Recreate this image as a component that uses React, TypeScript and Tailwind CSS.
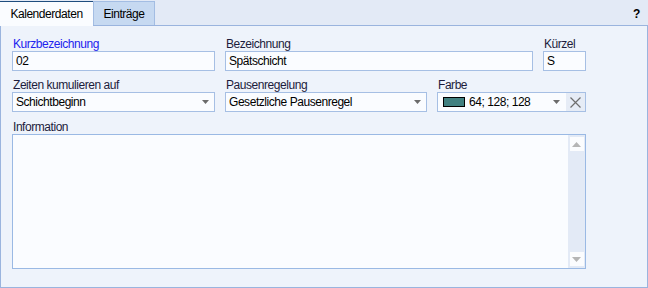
import React from "react";

const Arrow = () => (
  <svg width="7" height="4" viewBox="0 0 7 4" className="shrink-0">
    <path d="M0 0H7L3.5 4Z" fill="#6b6b6b" />
  </svg>
);

function Label({ children, blue }: { children: React.ReactNode; blue?: boolean }) {
  return (
    <div className={`h-[14px] leading-[14px] pl-[1px] ${blue ? "text-[#2222ee]" : "text-[#1c1c3c]"}`}>{children}</div>
  );
}

function Input({ value, w }: { value: string; w: string }) {
  return (
    <div className={`${w} h-[20px] border border-[#a6bfe4] bg-[#fafcff] flex items-center px-[3px] text-black`}>{value}</div>
  );
}

function Select({ value, w }: { value: string; w: string }) {
  return (
    <div className={`${w} h-[20px] border border-[#a6bfe4] bg-[#fafcff] flex items-center pl-[3px] pr-[5px] text-black`}>
      <span className="flex-1">{value}</span>
      <Arrow />
    </div>
  );
}

export default function App() {
  return (
    <div
      className="w-[648px] h-[288px] bg-[#e3eaf6] flex flex-col text-[12px] tracking-[-0.45px] overflow-hidden"
      style={{ fontFamily: '"Segoe UI", "Liberation Sans", Arial, sans-serif' }}
    >
      <div className="h-[25px] flex items-end relative">
        <div className="w-[93px] h-[25px] bg-[#fafcff] border-t border-t-[#1f4d7e] flex items-center justify-center text-black -mb-[1px] z-10 relative">
          Kalenderdaten
        </div>
        <div className="w-[62px] h-[24px] bg-[#c6d9f1] border border-[#a3bde3] border-b-0 flex items-center justify-center text-black">
          Einträge
        </div>
        <div className="flex-1" />
        <div className="absolute right-[8px] top-[5px] font-bold text-black">?</div>
      </div>
      <div className="flex-1 border border-[#9ab4de] bg-[#eef3fb] pl-[11px] pt-[11px]">
        <div className="flex gap-[10px]">
          <div className="flex flex-col gap-0">
            <Label blue>Kurzbezeichnung</Label>
            <Input value="02" w="w-[203px]" />
          </div>
          <div className="flex flex-col">
            <Label>Bezeichnung</Label>
            <Input value="Spätschicht" w="w-[308px]" />
          </div>
          <div className="flex flex-col">
            <Label>Kürzel</Label>
            <Input value="S" w="w-[43px]" />
          </div>
        </div>
        <div className="flex gap-[10px] mt-[7px]">
          <div className="flex flex-col">
            <Label>Zeiten kumulieren auf</Label>
            <Select value="Schichtbeginn" w="w-[203px]" />
          </div>
          <div className="flex flex-col">
            <Label>Pausenregelung</Label>
            <Select value="Gesetzliche Pausenregel" w="w-[202px]" />
          </div>
          <div className="flex flex-col">
            <Label>Farbe</Label>
            <div className="w-[149px] h-[20px] border border-[#a6bfe4] bg-[#fafcff] flex items-center text-black">
              <div className="w-[22px] h-[10px] border border-black bg-[#408080] ml-[5px] mr-[4px]" />
              <span className="flex-1">64; 128; 128</span>
              <div className="pr-[6px]"><Arrow /></div>
              <div className="w-[19px] h-full bg-[#e6ecf6] flex items-center justify-center">
                <svg width="11" height="11" viewBox="0 0 11 11">
                  <path d="M0.5 0.5L10.5 10.5M10.5 0.5L0.5 10.5" stroke="#6e6e6e" strokeWidth="1.2" />
                </svg>
              </div>
            </div>
          </div>
        </div>
        <div className="mt-[8px] flex flex-col">
          <Label>Information</Label>
          <div className="w-[574px] h-[135px] border border-[#9ab9e4] bg-[#fafcff] flex justify-end">
            <div className="w-[17px] h-full bg-[#e3eaf6] flex flex-col justify-between items-center py-[2px]">
              <div className="w-[14px] h-[14px] bg-[#fbfcfe] flex items-center justify-center">
                <svg width="9" height="5" viewBox="0 0 9 5"><path d="M0 5H9L4.5 0Z" fill="#b5b5b5" /></svg>
              </div>
              <div className="w-[14px] h-[14px] bg-[#fbfcfe] flex items-center justify-center">
                <svg width="9" height="5" viewBox="0 0 9 5"><path d="M0 0H9L4.5 5Z" fill="#b5b5b5" /></svg>
              </div>
            </div>
          </div>
        </div>
      </div>
    </div>
  );
}
